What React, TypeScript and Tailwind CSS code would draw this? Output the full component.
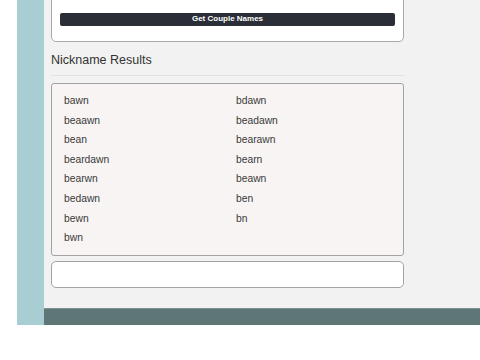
import React from "react";

const names: [string, string][] = [
  ["bawn", "bdawn"],
  ["beaawn", "beadawn"],
  ["bean", "bearawn"],
  ["beardawn", "bearn"],
  ["bearwn", "beawn"],
  ["bedawn", "ben"],
  ["bewn", "bn"],
  ["bwn", ""],
];

export default function App() {
  return (
    <div
      className="w-[480px] h-[360px] bg-white overflow-hidden"
      style={{ fontFamily: '"Liberation Sans", Arial, sans-serif' }}
    >
      <div className="flex ml-[17px] h-[325px]">
        <div className="w-[27px] shrink-0 bg-[#a8ced4]" />
        <div className="flex-1 flex flex-col">
          <div className="flex-1 bg-[#f2f2f2] pl-[7px] pr-[76px]">
            <div className="-mt-[10px] h-[52px] bg-white border border-[#a9a9ad] rounded-[5px] pt-[22px] px-[8px]">
              <div className="h-[12.5px] bg-[#2b2e36] rounded-[2px] flex items-center justify-center text-white text-[8px] font-bold leading-none">
                Get Couple Names
              </div>
            </div>
            <div className="mt-[11px] text-[12.5px] text-[#333] leading-[14px]">Nickname Results</div>
            <div className="mt-[8px] h-px bg-[#e2e2e2]" />
            <div className="mt-[7px] h-[173px] bg-[#f7f4f3] border border-[#a3a3a6] rounded-[3px] pt-[7px] pl-[12px]">
              <div className="grid grid-cols-[172px_1fr] text-[10.3px] text-[#3a3a3a] leading-[19.6px]">
                {names.map(([a, b], i) => (
                  <React.Fragment key={i}>
                    <div>{a}</div>
                    <div>{b}</div>
                  </React.Fragment>
                ))}
              </div>
            </div>
            <div className="mt-[5px] h-[27px] bg-white border border-[#a3a3a6] rounded-[5px]" />
          </div>
          <div className="h-[17px] bg-[#5f7677] border-t border-[#7d9293]" />
        </div>
      </div>
    </div>
  );
}
